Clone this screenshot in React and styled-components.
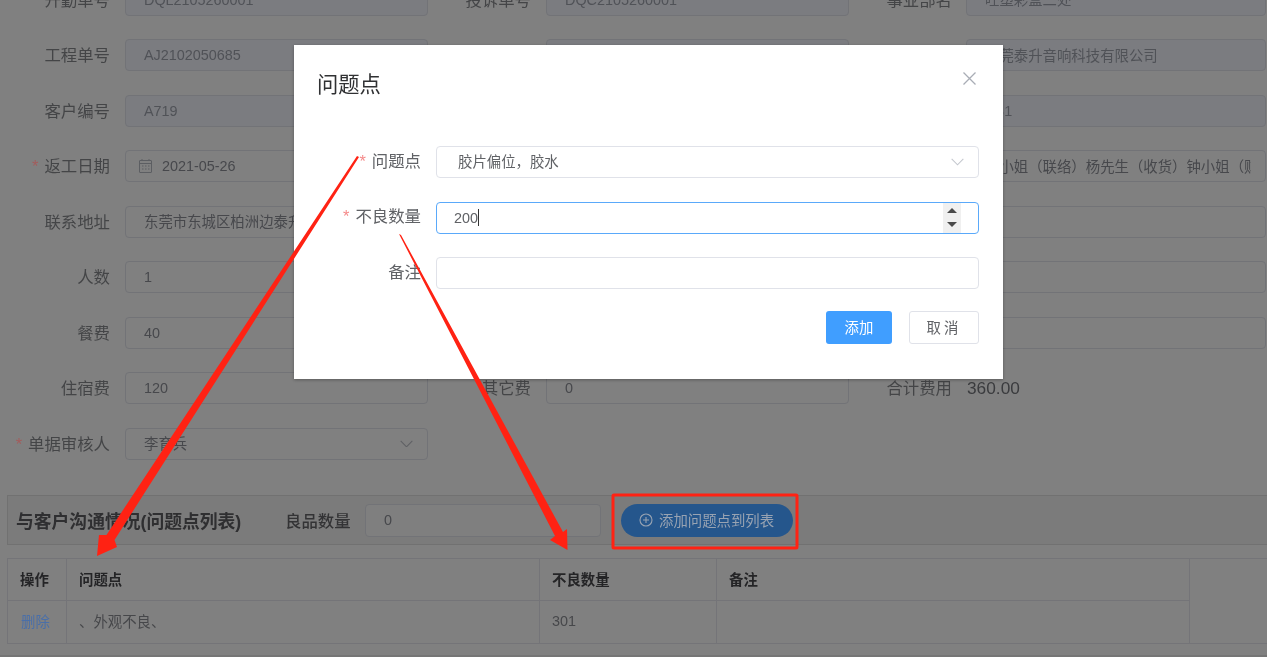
import React from "react";
import styled, { createGlobalStyle } from "styled-components";

const Global = createGlobalStyle`
  html, body { margin: 0; padding: 0; height: 100%; overflow: hidden; background: #808080; }
  * { box-sizing: border-box; }
`;

const FONT = `"Liberation Sans", "Noto Sans CJK SC", sans-serif`;

const Page = styled.div`
  position: relative;
  width: 1267px;
  height: 657px;
  overflow: hidden;
  background: #808080;
  font-family: ${FONT};
  filter: blur(0.45px);
`;

const FormGrid = styled.div`
  margin-top: -16.5px;
  display: grid;
  grid-template-columns: 421px 421px 425px;
  grid-auto-rows: 32px;
  row-gap: 23.5px;
`;

const Field = styled.div`
  display: grid;
  grid-template-columns: 110px 1fr;
  column-gap: ${p => (p.$third ? 14 : 15)}px;
  align-items: center;
`;

const Label = styled.label`
  text-align: right;
  font-size: 16.4px;
  padding-bottom: 2px;
  color: #444547;
  white-space: nowrap;
`;

const Star = styled.span`
  color: ${p => (p.$light ? "#f58a8a" : "#a35c5c")};
  margin-right: 6px;
`;

const Control = styled.div`
  height: 32px;
  display: flex;
  align-items: center;
  gap: 10px;
  padding: 0 14px 0 ${p => (p.$date ? 13 : 18)}px;
  border: 1px solid #727377;
  border-radius: 4px;
  background: ${p => (p.$disabled ? "#7b7c80" : "#808080")};
  color: ${p => (p.$disabled ? "#505257" : "#47484c")};
  font-size: 14.4px;
  overflow: hidden;
  width: ${p => p.$width}px;
`;

const ControlText = styled.span`
  flex: 1;
  white-space: nowrap;
  overflow: hidden;
  padding-bottom: ${p => (p.$cjk ? 2 : 0)}px;
`;

const StaticValue = styled.span`
  font-size: 17.3px;
  color: #3a3b3e;
  padding-left: 1px;
`;

const Panel = styled.div`
  margin: 35.5px 0 0 7px;
  width: 1262px;
  height: 50px;
  display: flex;
  align-items: center;
  padding-left: 8px;
  background: #7b7b7b;
  border: 1px solid #717171;
`;

const PanelTitle = styled.span`
  font-size: 17.8px;
  font-weight: 700;
  color: #2f2f31;
  white-space: nowrap;
  width: 269px;
`;

const PanelLabel = styled.span`
  font-size: 16.4px;
  font-weight: 500;
  color: #333335;
  width: 80px;
  white-space: nowrap;
`;

const GoodInput = styled.div`
  width: 236px;
  height: 33px;
  padding-left: 18px;
  display: flex;
  align-items: center;
  font-size: 14.4px;
  color: #47484c;
  border: 1px solid #727377;
  border-radius: 4px;
  background: #7f7f7f;
`;

const AddButton = styled.div`
  margin-left: 20px;
  width: 172px;
  height: 33px;
  border-radius: 17px;
  background: #25568c;
  color: #98a3b2;
  font-size: 14.4px;
  display: flex;
  align-items: center;
  gap: 6px;
  padding-left: 18px;
  white-space: nowrap;
`;

const AddLabel = styled.span`
  padding-bottom: 2px;
`;

const TableWrap = styled.div`
  margin: 13px 0 0 7px;
  width: 1262px;
  height: 86px;
  border-top: 1px solid #747478;
  border-bottom: 1px solid #747478;
  border-left: 1px solid #747478;
  display: grid;
  grid-template-columns: 59px 473px 177px 473px 1fr;
  grid-template-rows: 42px 42px;
  font-size: 14.4px;
`;

const Cell = styled.div`
  display: flex;
  align-items: center;
  padding-left: ${p => (p.$pad ? p.$pad : 12)}px;
  padding-bottom: 3px;
  border-right: 1px solid #747478;
  border-bottom: ${p => (p.$last ? "none" : "1px solid #747478")};
  color: ${p => (p.$head ? "#242426" : p.$link ? "#4a6fa8" : "#46474a")};
  font-weight: ${p => (p.$head ? 700 : 400)};
`;

const Spacer = styled.div`
  grid-row: 1 / span 2;
  grid-column: 5;
`;

const FooterLine = styled.div`
  margin-top: 11px;
  height: 2px;
  background: #757575;
`;

const Dialog = styled.div`
  position: absolute;
  left: 294px;
  top: 45px;
  width: 709px;
  height: 334px;
  background: #fff;
  box-shadow: 0 1px 3px rgba(0, 0, 0, 0.3);
  padding: 0 24px 0 0;
  color: #606266;
`;

const DialogHead = styled.div`
  height: 101px;
  padding: 25px 0 0 23px;
  display: flex;
  justify-content: space-between;
  align-items: flex-start;
`;

const DialogTitle = styled.div`
  font-size: 21.3px;
  line-height: 30px;
  color: #303133;
`;

const CloseIcon = styled.svg`
  width: 13px;
  height: 13px;
  margin: 2px 3px 0 0;
  stroke: #a9adb5;
  stroke-width: 1.3;
  fill: none;
`;

const DialogForm = styled.div`
  display: flex;
  flex-direction: column;
  gap: 23.5px;
`;

const DialogRow = styled.div`
  display: grid;
  grid-template-columns: 127px 1fr;
  column-gap: 15px;
  align-items: center;
`;

const DialogLabel = styled.label`
  font-size: 16.4px;
  text-align: right;
  padding-bottom: 5px;
  color: #606266;
  white-space: nowrap;
`;

const DialogInput = styled.div`
  position: relative;
  height: 32px;
  display: flex;
  align-items: center;
  padding: 0 14px 0 ${p => (p.$pad ? p.$pad : 17)}px;
  font-size: 14.4px;
  color: #606266;
  border: 1px solid ${p => (p.$focus ? "#5aa9fa" : "#e0e2e9")};
  border-radius: 4px;
  background: #fff;
`;

const SelectText = styled.span`
  flex: 1;
  padding-bottom: 4px;
`;

const Caret = styled.span`
  display: inline-block;
  width: 1px;
  height: 17px;
  background: #333;
`;

const Spinner = styled.div`
  position: absolute;
  right: 17px;
  top: 0;
  bottom: 0;
  width: 18px;
  background: #f0f0f0;
  display: flex;
  flex-direction: column;
  align-items: center;
  justify-content: center;
  gap: 9.5px;
`;

const Tri = styled.span`
  width: 0;
  height: 0;
  border-left: 5px solid transparent;
  border-right: 5px solid transparent;
  ${p => (p.$down ? "border-top: 5px solid #4a4a4a;" : "border-bottom: 5px solid #4a4a4a;")}
`;

const DialogActions = styled.div`
  margin-top: 21.5px;
  display: flex;
  justify-content: flex-end;
  gap: 17px;
`;

const PrimaryBtn = styled.div`
  width: 66px;
  height: 33px;
  padding-bottom: 2px;
  background: #409eff;
  color: #fff;
  font-size: 14.4px;
  border-radius: 3px;
  display: flex;
  align-items: center;
  justify-content: center;
`;

const PlainBtn = styled.div`
  width: 70px;
  height: 33px;
  padding-bottom: 2px;
  background: #fff;
  color: #606266;
  font-size: 14.4px;
  letter-spacing: 3px;
  border: 1px solid #e0e2e9;
  border-radius: 3px;
  display: flex;
  align-items: center;
  justify-content: center;
`;

const Marks = styled.svg`
  position: absolute;
  left: 0;
  top: 0;
  width: 1267px;
  height: 657px;
  pointer-events: none;
`;

const Chevron = ({ color, size = 13 }) => (
  <svg width={size} height={size * 0.6} viewBox="0 0 13 8" fill="none" stroke={color} strokeWidth="1.1">
    <path d="M0.5 0.8 L6.5 7 L12.5 0.8" />
  </svg>
);

const CalendarIcon = () => (
  <svg width="13" height="14" viewBox="0 0 13 14" fill="none" stroke="#5c5e62" strokeWidth="1">
    <rect x="0.5" y="1.5" width="12" height="12" rx="0.5" />
    <path d="M0.5 4.5 H12.5 M3 0 V2 M10 0 V2" />
    <path d="M3 7 H4.5 M6 7 H7.5 M9 7 H10.5 M3 10 H4.5 M6 10 H7.5 M9 10 H10.5" />
  </svg>
);

const CirclePlus = () => (
  <svg width="14" height="14" viewBox="0 0 14 14" fill="none" stroke="#98a3b2" strokeWidth="1.1">
    <circle cx="7" cy="7" r="6" />
    <path d="M4 7 H10 M7 4 V10" />
  </svg>
);

const fields = [
  { label: "开勤单号", value: "DQL2105260001", disabled: true },
  { label: "投诉单号", value: "DQC2105260001", disabled: true },
  { label: "事业部名", value: "吐塑彩盒二处", disabled: true },
  { label: "工程单号", value: "AJ2102050685", disabled: true },
  { label: "产品名称", value: "", disabled: true },
  { label: "客户名称", value: "东莞泰升音响科技有限公司", disabled: true },
  { label: "客户编号", value: "A719", disabled: true },
  { label: "业务员", value: "", disabled: true },
  { label: "客户代码", value: "AB1", disabled: true },
  { label: "返工日期", value: "2021-05-26", required: true, date: true },
  { label: "返工地点", value: "" },
  { label: "联系人", value: "钟小姐（联络）杨先生（收货）钟小姐（财务）" },
  { label: "联系地址", value: "东莞市东城区柏洲边泰升音响科技有限公司" },
  { label: "联系电话", value: "" },
  { label: "备注", value: "" },
  { label: "人数", value: "1" },
  { label: "天数", value: "" },
  { label: "工时", value: "" },
  { label: "餐费", value: "40" },
  { label: "车费", value: "" },
  { label: "材料费", value: "" },
  { label: "住宿费", value: "120" },
  { label: "其它费", value: "0" },
];

const hasCjk = text => /[\u4e00-\u9fff]/.test(text);

export default function App() {
  return (
    <Page>
      <Global />
      <FormGrid>
        {fields.map((f, i) => (
          <Field key={i} $third={i % 3 === 2}>
            <Label>
              {f.required && <Star>*</Star>}
              {f.label}
            </Label>
            <Control $disabled={f.disabled} $date={f.date} $width={i % 3 === 2 ? 300 : 303}>
              {f.date && <CalendarIcon />}
              <ControlText $cjk={hasCjk(f.value)}>{f.value}</ControlText>
            </Control>
          </Field>
        ))}
        <Field $third>
          <Label>合计费用</Label>
          <StaticValue>360.00</StaticValue>
        </Field>
        <Field>
          <Label>
            <Star>*</Star>单据审核人
          </Label>
          <Control $width={303}>
            <ControlText $cjk>李育兵</ControlText>
            <Chevron color="#5f6064" />
          </Control>
        </Field>
      </FormGrid>

      <Panel>
        <PanelTitle>与客户沟通情况(问题点列表)</PanelTitle>
        <PanelLabel>良品数量</PanelLabel>
        <GoodInput>0</GoodInput>
        <AddButton>
          <CirclePlus />
          <AddLabel>添加问题点到列表</AddLabel>
        </AddButton>
      </Panel>

      <TableWrap>
        <Cell $head>操作</Cell>
        <Cell $head>问题点</Cell>
        <Cell $head>不良数量</Cell>
        <Cell $head>备注</Cell>
        <Spacer />
        <Cell $link $last $pad={13}>删除</Cell>
        <Cell $last>、外观不良、</Cell>
        <Cell $last>301</Cell>
        <Cell $last />
      </TableWrap>
      <FooterLine />

      <Dialog>
        <DialogHead>
          <DialogTitle>问题点</DialogTitle>
          <CloseIcon viewBox="0 0 13 13">
            <path d="M0.5 0.5 L12.5 12.5 M12.5 0.5 L0.5 12.5" />
          </CloseIcon>
        </DialogHead>
        <DialogForm>
          <DialogRow>
            <DialogLabel>
              <Star $light>*</Star>问题点
            </DialogLabel>
            <DialogInput $pad={21}>
              <SelectText>胶片偏位，胶水</SelectText>
              <Chevron color="#c4c7ce" />
            </DialogInput>
          </DialogRow>
          <DialogRow>
            <DialogLabel>
              <Star $light>*</Star>不良数量
            </DialogLabel>
            <DialogInput $focus>
              200
              <Caret />
              <Spinner>
                <Tri />
                <Tri $down />
              </Spinner>
            </DialogInput>
          </DialogRow>
          <DialogRow>
            <DialogLabel>备注</DialogLabel>
            <DialogInput />
          </DialogRow>
        </DialogForm>
        <DialogActions>
          <PrimaryBtn>添加</PrimaryBtn>
          <PlainBtn>取消</PlainBtn>
        </DialogActions>
      </Dialog>

      <Marks viewBox="0 0 1267 657">
        <g fill="#ff2213">
          <polygon points="357,156 359,157 114.5,540 117,547 97,556 99,535 106.5,535" />
          <polygon points="399,234 401,235 563,532 567,529 567.5,550 550,540 555,536" />
        </g>
        <rect x="613" y="495" width="184" height="53" rx="1" fill="none" stroke="#ff2213" strokeWidth="3" />
      </Marks>
    </Page>
  );
}
